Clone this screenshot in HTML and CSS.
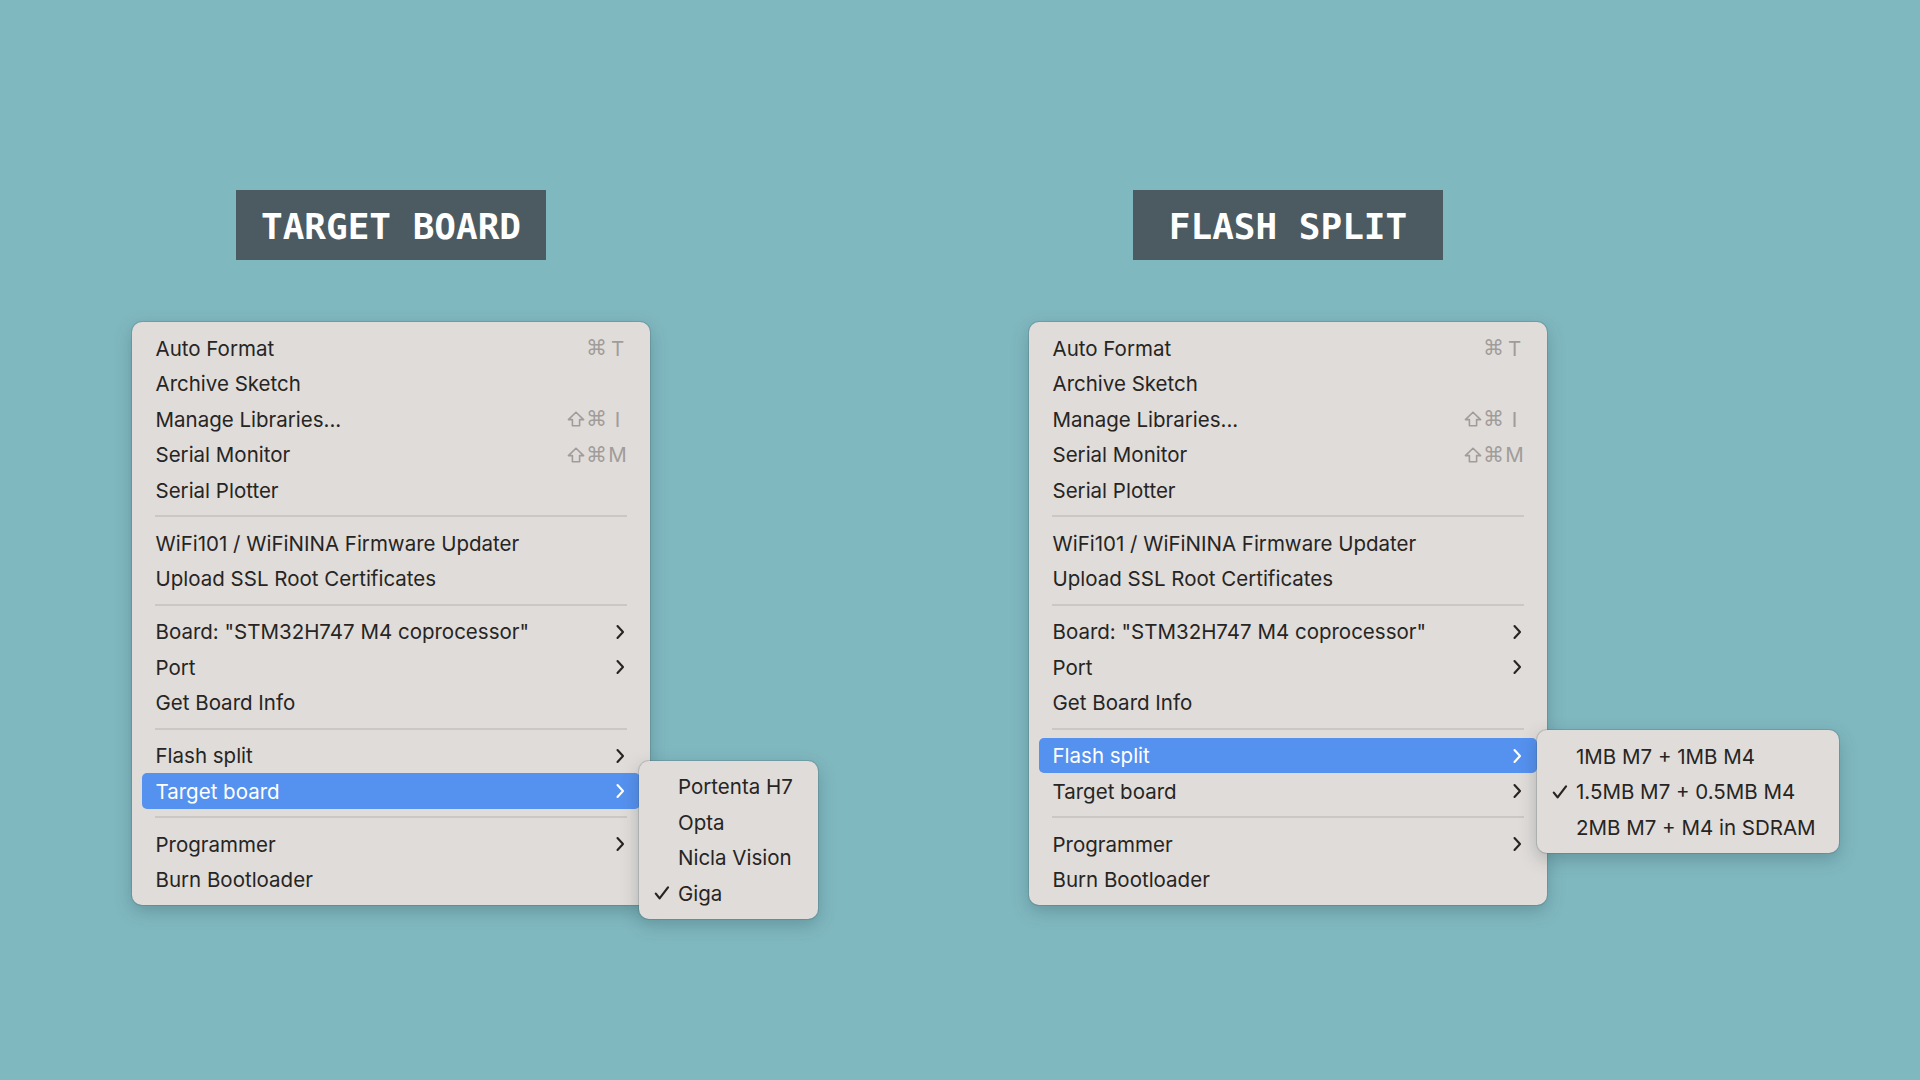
FILE: index.html
```html
<!DOCTYPE html>
<html lang="en">
<head>
<meta charset="utf-8">
<title>Target board / Flash split</title>
<link rel="stylesheet" href="styles.css">
</head>
<body>
<div class="column">
  <div class="heading">TARGET BOARD</div>
  <div class="menu">
    <div class="item"><span class="label">Auto Format</span><span class="keys"><span class="mod">⌘</span><span class="key">T</span></span></div>
    <div class="item"><span class="label">Archive Sketch</span></div>
    <div class="item"><span class="label">Manage Libraries...</span><span class="keys"><span class="mod"><svg class="shift" viewBox="0 0 18 16"><path d="M9 1.2 L16.6 8.6 H12.6 V14.8 H5.4 V8.6 H1.4 Z"/></svg></span><span class="mod">⌘</span><span class="key">I</span></span></div>
    <div class="item"><span class="label">Serial Monitor</span><span class="keys"><span class="mod"><svg class="shift" viewBox="0 0 18 16"><path d="M9 1.2 L16.6 8.6 H12.6 V14.8 H5.4 V8.6 H1.4 Z"/></svg></span><span class="mod">⌘</span><span class="key">M</span></span></div>
    <div class="item"><span class="label">Serial Plotter</span></div>
    <div class="sep"></div>
    <div class="item"><span class="label">WiFi101 / WiFiNINA Firmware Updater</span></div>
    <div class="item"><span class="label">Upload SSL Root Certificates</span></div>
    <div class="sep"></div>
    <div class="item"><span class="label">Board: "STM32H747 M4 coprocessor"</span><svg class="chev" viewBox="0 0 10 16"><polyline points="2.5,2 8,8 2.5,14"/></svg></div>
    <div class="item"><span class="label">Port</span><svg class="chev" viewBox="0 0 10 16"><polyline points="2.5,2 8,8 2.5,14"/></svg></div>
    <div class="item"><span class="label">Get Board Info</span></div>
    <div class="sep"></div>
    <div class="item"><span class="label">Flash split</span><svg class="chev" viewBox="0 0 10 16"><polyline points="2.5,2 8,8 2.5,14"/></svg></div>
    <div class="item active"><span class="label">Target board</span><svg class="chev" viewBox="0 0 10 16"><polyline points="2.5,2 8,8 2.5,14"/></svg></div>
    <div class="sep"></div>
    <div class="item"><span class="label">Programmer</span><svg class="chev" viewBox="0 0 10 16"><polyline points="2.5,2 8,8 2.5,14"/></svg></div>
    <div class="item"><span class="label">Burn Bootloader</span></div>

    <div class="submenu sub-target">
      <div class="sub-item"><span class="gutter"></span>Portenta H7</div>
      <div class="sub-item"><span class="gutter"></span>Opta</div>
      <div class="sub-item"><span class="gutter"></span>Nicla Vision</div>
      <div class="sub-item"><span class="gutter"><svg class="check" viewBox="0 0 16 14"><polyline points="1.8,7.6 5.6,12.4 14,1.4"/></svg></span>Giga</div>
    </div>
  </div>
</div>

<div class="column">
  <div class="heading">FLASH SPLIT</div>
  <div class="menu">
    <div class="item"><span class="label">Auto Format</span><span class="keys"><span class="mod">⌘</span><span class="key">T</span></span></div>
    <div class="item"><span class="label">Archive Sketch</span></div>
    <div class="item"><span class="label">Manage Libraries...</span><span class="keys"><span class="mod"><svg class="shift" viewBox="0 0 18 16"><path d="M9 1.2 L16.6 8.6 H12.6 V14.8 H5.4 V8.6 H1.4 Z"/></svg></span><span class="mod">⌘</span><span class="key">I</span></span></div>
    <div class="item"><span class="label">Serial Monitor</span><span class="keys"><span class="mod"><svg class="shift" viewBox="0 0 18 16"><path d="M9 1.2 L16.6 8.6 H12.6 V14.8 H5.4 V8.6 H1.4 Z"/></svg></span><span class="mod">⌘</span><span class="key">M</span></span></div>
    <div class="item"><span class="label">Serial Plotter</span></div>
    <div class="sep"></div>
    <div class="item"><span class="label">WiFi101 / WiFiNINA Firmware Updater</span></div>
    <div class="item"><span class="label">Upload SSL Root Certificates</span></div>
    <div class="sep"></div>
    <div class="item"><span class="label">Board: "STM32H747 M4 coprocessor"</span><svg class="chev" viewBox="0 0 10 16"><polyline points="2.5,2 8,8 2.5,14"/></svg></div>
    <div class="item"><span class="label">Port</span><svg class="chev" viewBox="0 0 10 16"><polyline points="2.5,2 8,8 2.5,14"/></svg></div>
    <div class="item"><span class="label">Get Board Info</span></div>
    <div class="sep"></div>
    <div class="item active"><span class="label">Flash split</span><svg class="chev" viewBox="0 0 10 16"><polyline points="2.5,2 8,8 2.5,14"/></svg></div>
    <div class="item"><span class="label">Target board</span><svg class="chev" viewBox="0 0 10 16"><polyline points="2.5,2 8,8 2.5,14"/></svg></div>
    <div class="sep"></div>
    <div class="item"><span class="label">Programmer</span><svg class="chev" viewBox="0 0 10 16"><polyline points="2.5,2 8,8 2.5,14"/></svg></div>
    <div class="item"><span class="label">Burn Bootloader</span></div>

    <div class="submenu sub-flash">
      <div class="sub-item"><span class="gutter"></span>1MB M7 + 1MB M4</div>
      <div class="sub-item"><span class="gutter"><svg class="check" viewBox="0 0 16 14"><polyline points="1.8,7.6 5.6,12.4 14,1.4"/></svg></span>1.5MB M7 + 0.5MB M4</div>
      <div class="sub-item"><span class="gutter"></span>2MB M7 + M4 in SDRAM</div>
    </div>
  </div>
</div>
</body>
</html>
```

FILE: styles.css
```css
* { box-sizing: border-box; }

html, body {
  margin: 0;
  padding: 0;
}

body {
  width: 1920px;
  height: 1080px;
  overflow: hidden;
  background: #80b8c0;
  display: flex;
  align-items: flex-start;
  gap: 379px;
  padding-left: 132px;
  font-family: "Inter", "Noto Sans", "DejaVu Sans", sans-serif;
  color: #262524;
}

.column {
  width: 518px;
  padding-top: 190px;
  display: flex;
  flex-direction: column;
  align-items: center;
}

.heading {
  width: 310px;
  height: 70px;
  background: #4c5a61;
  color: #ffffff;
  font-family: "DejaVu Sans Mono", "Liberation Mono", monospace;
  font-weight: 700;
  font-size: 36px;
  display: flex;
  align-items: center;
  justify-content: center;
  padding-top: 2px;
}

.menu {
  position: relative;
  width: 518px;
  margin-top: 62px;
  padding: 8px 0;
  background: #e0dcd9;
  border-radius: 10px;
  box-shadow: 0 0 0 1px rgba(60, 70, 75, 0.18), 0 6px 18px rgba(30, 60, 70, 0.28);
}

.item {
  height: 35.5px;
  margin: 0 10px;
  padding: 1px 13px 0 13.5px;
  display: flex;
  align-items: center;
  font-size: 20.5px;
  border-radius: 5px;
  white-space: nowrap;
}

.item .label {
  flex: 1;
}

.item.active {
  background: #5591ef;
  color: #ffffff;
}

.keys {
  display: flex;
  align-items: center;
  color: #a09c9a;
  font-family: "DejaVu Sans", "Inter", sans-serif;
  font-size: 21px;
}

.keys .mod {
  width: 21px;
  display: flex;
  justify-content: center;
  align-items: center;
}

.keys .key {
  width: 19px;
  text-align: center;
  font-family: "Inter", sans-serif;
  font-size: 20.5px;
  margin-left: 1px;
}

.shift {
  width: 18px;
  height: 16px;
  fill: none;
  stroke: #a09c9a;
  stroke-width: 1.6;
  stroke-linejoin: round;
}

.chev {
  width: 10px;
  height: 16px;
  margin-right: 2px;
  fill: none;
  stroke: currentColor;
  stroke-width: 2.1;
  stroke-linecap: round;
  stroke-linejoin: round;
}

.sep {
  height: 17.5px;
  margin: 0 23px;
  display: flex;
  align-items: center;
}

.sep::before {
  content: "";
  display: block;
  width: 100%;
  height: 2px;
  background: #cbc7c4;
}

.submenu {
  position: absolute;
  padding: 8px 0;
  background: #e0dcd9;
  border-radius: 10px;
  box-shadow: 0 0 0 1px rgba(60, 70, 75, 0.18), 0 6px 18px rgba(30, 60, 70, 0.28);
}

.sub-target {
  left: 507px;
  top: 438.5px;
  width: 179px;
}

.sub-flash {
  left: 508px;
  top: 408px;
  width: 302px;
}

.sub-item {
  height: 35.5px;
  padding-top: 1px;
  display: flex;
  align-items: center;
  font-size: 20.5px;
  white-space: nowrap;
}

.gutter {
  width: 39px;
  flex: none;
  display: flex;
  align-items: center;
  padding-left: 15px;
}

.check {
  width: 16px;
  height: 14px;
  fill: none;
  stroke: #262524;
  stroke-width: 2.2;
  stroke-linecap: round;
  stroke-linejoin: round;
}
```
